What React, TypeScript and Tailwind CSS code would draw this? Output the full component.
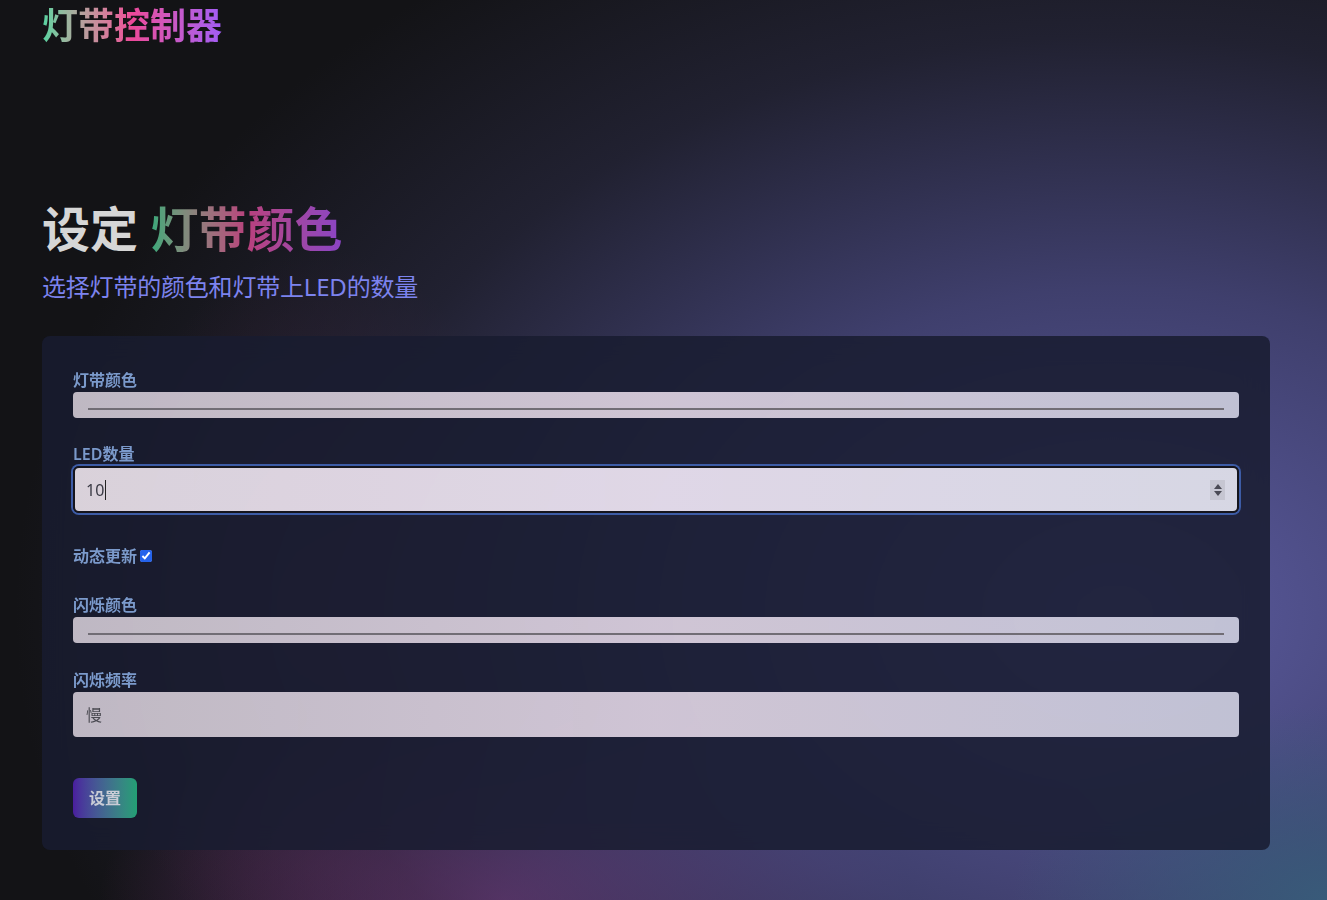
import React from "react";

const cjk = "font-['Noto_Sans','Noto_Sans_CJK_SC',sans-serif]";

const Label = ({ text }: { text: string }) => (
  <label className="block text-base leading-6 font-semibold text-[#7b9acb]">{text}</label>
);

const fieldBg =
  "bg-gradient-to-r from-[rgba(250,240,248,0.74)] via-[rgba(252,238,252,0.8)] to-[rgba(238,238,255,0.78)]";

const ColorField = () => (
  <div className={`flex h-[26px] w-full items-end rounded ${fieldBg} px-[15px] pb-[8px]`}>
    <div className="h-[2px] w-full bg-[#716d75]" />
  </div>
);

const App = () => {
  return (
    <div
      className={`${cjk} min-h-screen w-full bg-[#131316] bg-[radial-gradient(ellipse_420px_260px_at_100%_100%,rgba(56,92,122,0.95),transparent_75%),radial-gradient(ellipse_1250px_900px_at_84%_68%,rgba(96,96,168,0.95),rgba(80,80,142,0.72)_36%,rgba(50,50,82,0.45)_64%,transparent_88%),radial-gradient(ellipse_540px_270px_at_38%_100%,rgba(130,50,120,0.8),transparent_75%),radial-gradient(ellipse_320px_520px_at_24%_68%,rgba(120,40,85,0.35),transparent_70%)] pl-[42px] pr-[57px] pb-[49px]`}
    >
      <div className="pt-[6px]">
        <h1 className="inline-block bg-gradient-to-r from-[#4fd3a0] via-[#ec4899] to-[#a25cf5] bg-clip-text text-4xl leading-10 font-bold text-transparent">
          灯带控制器
        </h1>
      </div>

      <div className="mt-[159px]">
        <h2 className="text-5xl leading-none font-bold text-[#d6d6d6]">
          设定{" "}
          <span className="bg-gradient-to-r from-[#35a87a] via-[#b8407d] to-[#8a44c6] bg-clip-text text-transparent">
            灯带颜色
          </span>
        </h2>
        <p className="mt-[18px] text-2xl leading-8 tracking-[-0.2px] text-[#7c83ee]">选择灯带的颜色和灯带上LED的数量</p>
      </div>

      <div className="mt-[33px] w-[1228px] rounded-lg bg-[rgba(24,28,48,0.86)] px-[31px] pt-8 pb-[32px] backdrop-blur-md">
        <Label text="灯带颜色" />
        <ColorField />

        <div className="mt-6">
          <Label text="LED数量" />
          <div className="flex h-[47px] w-full items-center rounded-md border-2 border-[#15151d] bg-gradient-to-r from-[rgba(255,245,252,0.84)] via-[rgba(250,240,255,0.88)] to-[rgba(245,245,255,0.86)] pl-[11px] pr-[12px] ring-2 ring-[#3d5ca6]">
            <span className="text-base text-[#3a3a44]">10</span>
            <span className="ml-[1px] h-[20px] w-[1px] bg-[#222]" />
            <div className="ml-auto flex h-[20px] w-[15px] flex-col items-center justify-center gap-[2px] bg-[#c6c6d2]">
              <span className="h-0 w-0 border-x-[4px] border-b-[5px] border-x-transparent border-b-[#4a4a55]" />
              <span className="h-0 w-0 border-x-[4px] border-t-[5px] border-x-transparent border-t-[#4a4a55]" />
            </div>
          </div>
        </div>

        <div className="mt-[31px] flex items-center gap-[3px]">
          <Label text="动态更新" />
          <input type="checkbox" checked readOnly className="h-[12px] w-[12px] accent-[#2563eb]" />
        </div>

        <div className="mt-[25px]">
          <Label text="闪烁颜色" />
          <ColorField />
        </div>

        <div className="mt-[25px]">
          <Label text="闪烁频率" />
          <div className={`flex h-[45px] w-full items-center rounded ${fieldBg} px-[13px] text-base text-[#4a4a52]`}>慢</div>
        </div>

        <button className="mt-[41px] h-10 w-16 rounded-md bg-gradient-to-r from-[#4a1d9e] to-[#22a074] text-base font-bold text-[#c9ccd6]">
          设置
        </button>
      </div>
    </div>
  );
};

export default App;
